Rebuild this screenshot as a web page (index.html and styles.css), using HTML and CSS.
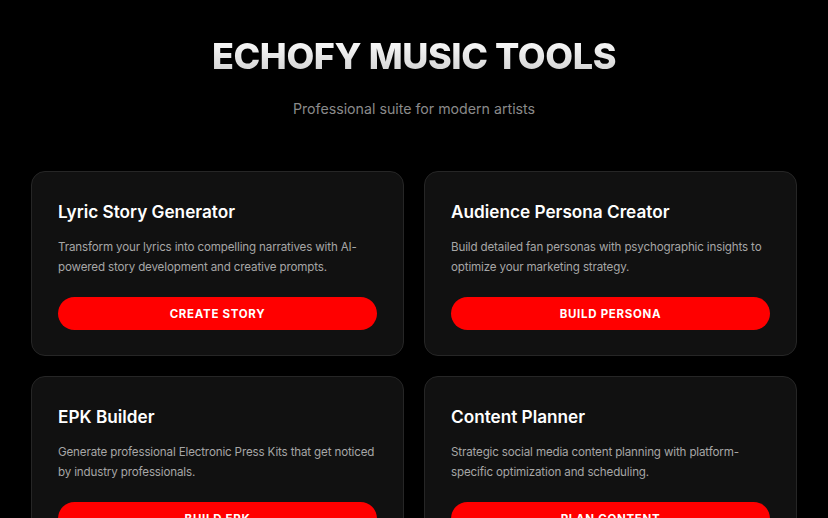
FILE: index.html
```html
<!DOCTYPE html>
<html lang="en">
<head>
<meta charset="utf-8">
<title>Echofy Music Tools</title>
<link rel="stylesheet" href="styles.css">
</head>
<body>
<main class="page">
  <header class="hero">
    <h1 class="hero-title">ECHOFY MUSIC TOOLS</h1>
    <p class="hero-sub">Professional suite for modern artists</p>
  </header>
  <section class="grid">
    <article class="card">
      <h2 class="card-title">Lyric Story Generator</h2>
      <p class="card-text">Transform your lyrics into compelling narratives with AI-powered story development and creative prompts.</p>
      <button class="card-btn">Create Story</button>
    </article>
    <article class="card">
      <h2 class="card-title">Audience Persona Creator</h2>
      <p class="card-text">Build detailed fan personas with psychographic insights to optimize your marketing strategy.</p>
      <button class="card-btn">Build Persona</button>
    </article>
    <article class="card">
      <h2 class="card-title">EPK Builder</h2>
      <p class="card-text">Generate professional Electronic Press Kits that get noticed by industry professionals.</p>
      <button class="card-btn">Build EPK</button>
    </article>
    <article class="card">
      <h2 class="card-title">Content Planner</h2>
      <p class="card-text">Strategic social media content planning with platform-specific optimization and scheduling.</p>
      <button class="card-btn">Plan Content</button>
    </article>
  </section>
</main>
</body>
</html>
```
FILE: styles.css
```css
* { box-sizing: border-box; }
html, body { margin: 0; padding: 0; background: #000; }
body { font-family: Inter, "Noto Sans", sans-serif; color: #fff; }
.page { padding: 0 31px; }
.hero { text-align: center; padding-top: 36px; }
.hero-title {
  margin: 0;
  font-size: 36px;
  line-height: 40px;
  font-weight: 800;
  letter-spacing: -0.4px;
  background: linear-gradient(180deg, #ffffff 0%, #cfcfcf 100%);
  -webkit-background-clip: text;
  background-clip: text;
  color: transparent;
}
.hero-sub {
  margin: 21px 0 0;
  font-size: 14.2px;
  line-height: 24px;
  color: #8a8a8a;
}
.grid {
  margin-top: 50px;
  display: grid;
  grid-template-columns: 1fr 1fr;
  gap: 20px;
}
.card {
  background: #111111;
  border: 1px solid #262626;
  border-radius: 14px;
  padding: 28px 26px 25px;
}
.card-title {
  margin: 0;
  font-size: 17.2px;
  line-height: 24px;
  font-weight: 600;
  color: #fff;
}
.card-text {
  margin: 13px 0 0;
  font-size: 11.6px;
  letter-spacing: -0.15px;
  line-height: 20px;
  color: #a6a6a6;
}
.card-btn {
  display: block;
  width: 100%;
  margin-top: 20px;
  height: 33px;
  border: none;
  border-radius: 999px;
  background: #ff0000;
  color: #fff;
  font-family: Inter, "Noto Sans", sans-serif;
  font-size: 11.5px;
  font-weight: 700;
  letter-spacing: 0.7px;
  text-transform: uppercase;
}
```
